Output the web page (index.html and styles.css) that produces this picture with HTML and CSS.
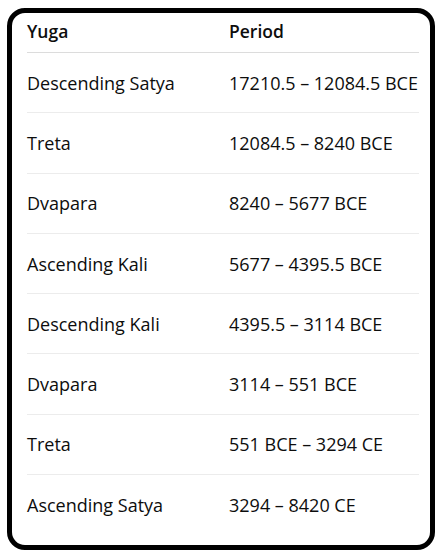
FILE: index.html
```html
<!DOCTYPE html>
<html>
<head>
<meta charset="utf-8">
<link rel="stylesheet" href="styles.css">
</head>
<body>
<div class="card">
  <div class="table">
    <div class="row head"><div>Yuga</div><div>Period</div></div>
    <div class="row"><div>Descending Satya</div><div>17210.5 – 12084.5 BCE</div></div>
    <div class="row"><div>Treta</div><div>12084.5 – 8240 BCE</div></div>
    <div class="row"><div>Dvapara</div><div>8240 – 5677 BCE</div></div>
    <div class="row"><div>Ascending Kali</div><div>5677 – 4395.5 BCE</div></div>
    <div class="row"><div>Descending Kali</div><div>4395.5 – 3114 BCE</div></div>
    <div class="row"><div>Dvapara</div><div>3114 – 551 BCE</div></div>
    <div class="row"><div>Treta</div><div>551 BCE – 3294 CE</div></div>
    <div class="row last"><div>Ascending Satya</div><div>3294 – 8420 CE</div></div>
  </div>
</div>
</body>
</html>
```
FILE: styles.css
```css
html, body {
  margin: 0;
  padding: 0;
  background: #ffffff;
}
body {
  width: 440px;
  height: 555px;
  overflow: hidden;
  font-family: "Open Sans", "Noto Sans", sans-serif;
  color: #0d0d0d;
}
.card {
  box-sizing: border-box;
  margin: 8px 0 0 7px;
  width: 428px;
  height: 542px;
  border: 5px solid #000;
  border-radius: 18px;
  padding: 0 11px 0 15px;
  overflow: hidden;
}
.table {
  width: 392px;
}
.row {
  box-sizing: border-box;
  display: grid;
  grid-template-columns: 202px 1fr;
  align-items: center;
  height: 60.3px;
  border-bottom: 1px solid #ececec;
  font-size: 18px;
  white-space: nowrap;
}
.row.head {
  height: 40px;
  padding-bottom: 4px;
  font-size: 17.5px;
  font-weight: 600;
  border-bottom-color: #dcdcdc;
}
.row.last {
  border-bottom: none;
}
```
